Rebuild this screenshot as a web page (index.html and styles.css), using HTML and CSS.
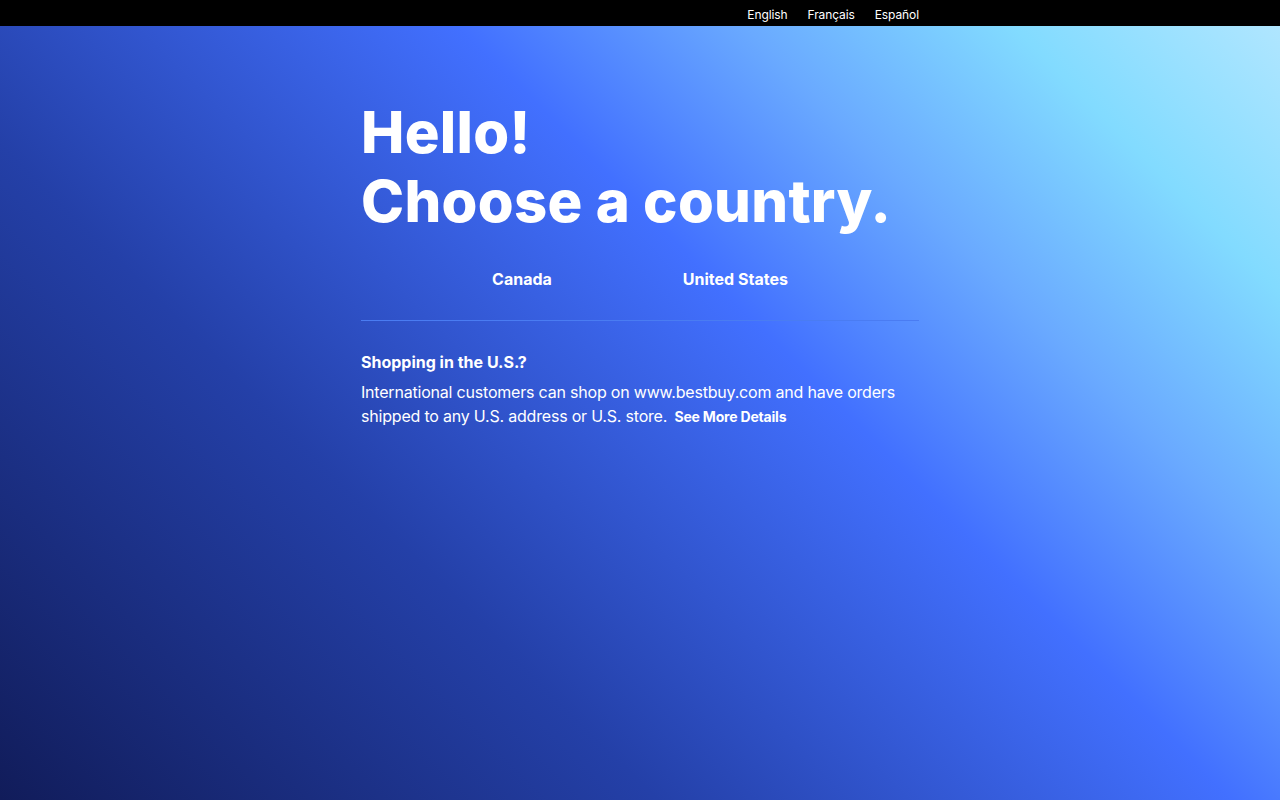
FILE: index.html
```html
<!DOCTYPE html>
<html lang="en">
<head>
<meta charset="utf-8">
<title>Best Buy - Choose a country</title>
<link rel="stylesheet" href="styles.css">
</head>
<body>
<header class="topbar">
  <nav class="lang">
    <a href="#">English</a>
    <a href="#">Français</a>
    <a href="#">Español</a>
  </nav>
</header>
<main class="hero">
  <div class="content">
    <h1 class="title">Hello!<br>Choose a country.</h1>
    <div class="countries">
      <a href="#">Canada</a>
      <a href="#">United States</a>
    </div>
    <hr class="divider">
    <h2 class="subtitle">Shopping in the U.S.?</h2>
    <p class="info">International customers can shop on www.bestbuy.com and have orders shipped to any U.S. address or U.S. store. <a href="#" class="more">See More Details</a></p>
  </div>
</main>
</body>
</html>
```
FILE: styles.css
```css
* { box-sizing: border-box; }
html, body { margin: 0; padding: 0; height: 100%; }
body {
  font-family: Inter, "Liberation Sans", sans-serif;
  color: #fff;
  background: #111c5a;
}
a { color: #fff; text-decoration: none; }
.topbar {
  height: 26px;
  background: #000;
  display: flex;
  justify-content: center;
}
.lang {
  width: 558px;
  display: flex;
  justify-content: flex-end;
  align-items: center;
  gap: 20px;
  padding-top: 2px;
  font-size: 12px;
  letter-spacing: -0.1px;
}
.hero {
  min-height: calc(100% - 26px);
  background: linear-gradient(45deg, #111c5a 0%, #2440a8 32%, #4270ff 60%, #6aaaff 74%, #82dbff 87%, #b0e6ff 100%);
  display: flex;
  justify-content: center;
}
.content {
  width: 558px;
  padding-top: 72px;
}
.title {
  margin: 0;
  font-size: 58px;
  line-height: 69px;
  font-weight: 800;
  letter-spacing: 0.3px;
}
.countries {
  display: flex;
  justify-content: center;
  gap: 131px;
  margin-top: 31px;
  font-size: 16px;
  font-weight: 700;
  line-height: 24px;
}
.divider {
  border: 0;
  height: 1px;
  background: #4a7cf2;
  margin: 29px 0 0;
}
.subtitle {
  margin: 29px 0 0;
  font-size: 16px;
  font-weight: 700;
  line-height: 24px;
}
.info {
  margin: 6px 0 0;
  font-size: 16px;
  line-height: 24px;
  letter-spacing: -0.2px;
}
.more {
  display: inline-block;
  font-size: 14px;
  font-weight: 700;
  letter-spacing: -0.2px;
  margin-left: 3px;
}
```
